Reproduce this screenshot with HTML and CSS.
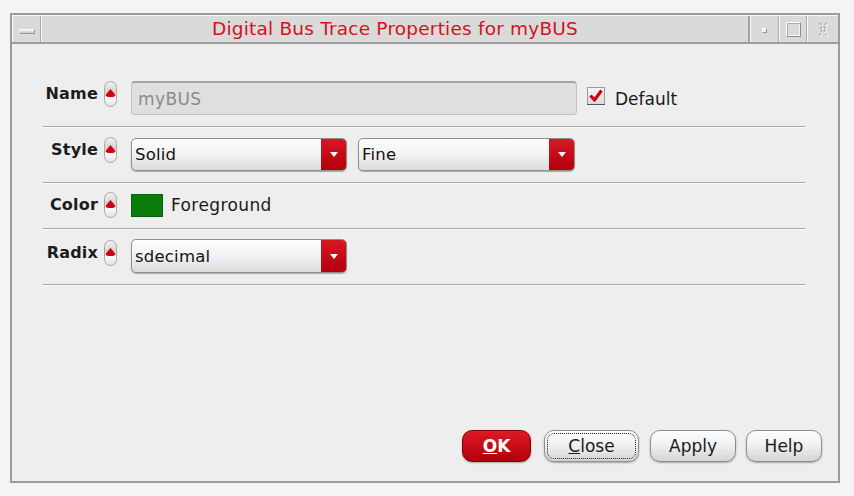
FILE: index.html
```html
<!DOCTYPE html>
<html lang="en">
<head>
<meta charset="utf-8">
<title>Digital Bus Trace Properties for myBUS</title>
<link rel="stylesheet" href="styles.css">
</head>
<body>
<div class="window">
  <div class="titlebar">
    <div class="tb-btn tb-menu"><span class="glyph-bar"></span></div>
    <div class="tb-title">Digital Bus Trace Properties for myBUS</div>
    <div class="tb-btn tb-min"><span class="glyph-dot"></span></div>
    <div class="tb-btn tb-max"><span class="glyph-box"></span></div>
    <div class="tb-btn tb-close">
      <svg width="14" height="16" viewBox="0 0 14 16">
        <path d="M3 2 Q8 5 4 8 Q8 11 3 14 M11 2 Q6 5 10 8 Q6 11 11 14" stroke="#fbfbfb" stroke-width="2.4" stroke-dasharray="3 1.4" fill="none" transform="translate(0.8 0.8)"/>
        <path d="M3 2 Q8 5 4 8 Q8 11 3 14 M11 2 Q6 5 10 8 Q6 11 11 14" stroke="#b3b3b3" stroke-width="1.8" stroke-dasharray="3 1.4" fill="none"/>
      </svg>
    </div>
  </div>

  <div class="content">
    <div class="form">
      <div class="row row-name">
        <div class="lbl-group">
          <span class="lbl">Name</span>
          <span class="spin"><svg width="11" height="10" viewBox="0 0 11 10"><path d="M5.5 1 L10.5 7 Q10.5 9 5.5 9 Q0.5 9 0.5 7 Z" fill="#cc0010"/></svg></span>
        </div>
        <div class="field">myBUS</div>
        <span class="check">
          <svg width="18" height="18" viewBox="0 0 18 18">
            <defs><linearGradient id="cg" x1="0" y1="0" x2="0" y2="1"><stop offset="0" stop-color="#f7f7f7"/><stop offset="1" stop-color="#d9d9d9"/></linearGradient></defs>
            <rect x="0.5" y="0.5" width="17" height="17" fill="url(#cg)" stroke="#9a9a9a"/>
            <line x1="0" y1="17.5" x2="18" y2="17.5" stroke="#555"/>
            <path d="M3.5 8.5 L7.5 13 L14.5 3.5" stroke="#d20010" stroke-width="3.2" fill="none" stroke-linejoin="round"/>
          </svg>
        </span>
        <span class="check-label">Default</span>
      </div>

      <div class="row row-style">
        <div class="lbl-group">
          <span class="lbl">Style</span>
          <span class="spin"><svg width="11" height="10" viewBox="0 0 11 10"><path d="M5.5 1 L10.5 7 Q10.5 9 5.5 9 Q0.5 9 0.5 7 Z" fill="#cc0010"/></svg></span>
        </div>
        <div class="select">
          <span class="select-text">Solid</span>
          <span class="select-arrow"><span class="tri"></span></span>
        </div>
        <div class="select select-fine">
          <span class="select-text">Fine</span>
          <span class="select-arrow"><span class="tri"></span></span>
        </div>
      </div>

      <div class="row row-color">
        <div class="lbl-group">
          <span class="lbl">Color</span>
          <span class="spin"><svg width="11" height="10" viewBox="0 0 11 10"><path d="M5.5 1 L10.5 7 Q10.5 9 5.5 9 Q0.5 9 0.5 7 Z" fill="#cc0010"/></svg></span>
        </div>
        <span class="swatch"></span>
        <span class="swatch-label">Foreground</span>
      </div>

      <div class="row row-radix">
        <div class="lbl-group">
          <span class="lbl">Radix</span>
          <span class="spin"><svg width="11" height="10" viewBox="0 0 11 10"><path d="M5.5 1 L10.5 7 Q10.5 9 5.5 9 Q0.5 9 0.5 7 Z" fill="#cc0010"/></svg></span>
        </div>
        <div class="select select-radix">
          <span class="select-text">sdecimal</span>
          <span class="select-arrow"><span class="tri"></span></span>
        </div>
      </div>
    </div>

    <div class="actions">
      <button class="btn btn-ok"><u>O</u>K</button>
      <button class="btn btn-close"><u>C</u>lose</button>
      <button class="btn btn-apply">Apply</button>
      <button class="btn btn-help">Help</button>
    </div>
  </div>
</div>
</body>
</html>
```

FILE: styles.css
```css
html, body {
  margin: 0;
  padding: 0;
}
body {
  background: #f4f4f4;
  font-family: "DejaVu Sans", "Noto Sans", sans-serif;
  width: 854px;
  height: 496px;
  overflow: hidden;
}

.window {
  margin: 13px 0 0 10px;
  width: 830px;
  height: 470px;
  box-sizing: border-box;
  border: 2px solid #9b9b9b;
  background: #eeeeee;
  display: flex;
  flex-direction: column;
}

/* title bar */
.titlebar {
  display: flex;
  height: 29px;
  box-sizing: border-box;
  border-top: 1px solid #fafafa;
  border-bottom: 2px solid #9d9d9d;
  background: #dadada;
}
.tb-btn {
  display: flex;
  align-items: center;
  justify-content: center;
  box-sizing: border-box;
  border-left: 1px solid #fafafa;
  border-right: 1px solid #a9a9a9;
}
.tb-menu { width: 29px; }
.tb-min { width: 29px; }
.tb-max { width: 28px; }
.tb-close { width: 31px; border-right: none; }
.tb-title {
  flex: 1;
  text-align: center;
  color: #d4121c;
  font-size: 18.5px;
  letter-spacing: 0.2px;
  line-height: 26px;
  white-space: nowrap;
  border-left: 1px solid #fafafa;
  border-right: 2px solid #a2a2a2;
}
.glyph-bar {
  width: 16px;
  height: 5px;
  box-sizing: border-box;
  margin-top: 4px;
  border: 1px solid;
  border-color: #fbfbfb #9a9a9a #9a9a9a #fbfbfb;
  background: linear-gradient(#f2f2f2, #c4c4c4);
}
.glyph-dot {
  width: 5px;
  height: 5px;
  box-sizing: border-box;
  margin-top: 2px;
  border: 1px solid;
  border-color: #fdfdfd #999 #999 #fdfdfd;
  background: #ececec;
}
.glyph-box {
  width: 15px;
  height: 15px;
  box-sizing: border-box;
  border: 1px solid;
  border-color: #fdfdfd #8f8f8f #8f8f8f #fdfdfd;
  box-shadow: inset 1px 1px 0 #a8a8a8, inset -1px -1px 0 #f6f6f6;
}

/* content */
.content {
  flex: 1;
  display: flex;
  flex-direction: column;
}
.form {
  margin: 37px 33px 0 31px;
}
.row {
  display: flex;
  align-items: flex-start;
  border-bottom: 1px solid #a9a9a9;
  box-shadow: 0 1px 0 #fbfbfb;
}
.row-name { padding: 0 0 11px; }
.row-style { padding: 10px 0 11px; }
.row-color { padding: 9px 0 10px; }
.row-radix { padding: 10px 0 11px; }

.lbl-group {
  display: flex;
  align-items: center;
  height: 26px;
  margin-right: 14px;
}
.row-radix .lbl-group { margin-top: 1px; }
.lbl {
  width: 55px;
  margin-right: 6px;
  margin-bottom: 1px;
  text-align: right;
  font-weight: bold;
  font-size: 16px;
  letter-spacing: 0.2px;
  color: #1c1c1c;
}
.spin {
  width: 13px;
  height: 26px;
  box-sizing: border-box;
  border: 1px solid #a9a9a9;
  border-radius: 7px;
  background: linear-gradient(#f3f3f3, #cdcdcd 46%, #ffffff 54%, #e4e4e4);
  display: flex;
  align-items: center;
  justify-content: center;
}
.spin svg { margin-top: -2px; }

.field {
  width: 446px;
  height: 34px;
  box-sizing: border-box;
  border: 1px solid #c2c2c2;
  border-top: 2px solid #a6a6a6;
  border-radius: 4px;
  background: #dfdfdf;
  color: #8a8a8a;
  font-size: 17px;
  letter-spacing: 0.4px;
  padding-left: 6px;
  display: flex;
  align-items: center;
}
.check {
  margin: 6px 0 0 10px;
  width: 18px;
  height: 18px;
}
.check svg { display: block; }
.check-label {
  margin: 8px 0 0 10px;
  font-size: 17px;
  line-height: 20px;
  color: #1a1a1a;
}

.select {
  display: flex;
  width: 216px;
  height: 33px;
  margin-top: 1px;
  box-sizing: border-box;
  border: 1px solid #8e8e8e;
  border-radius: 5px;
  background: linear-gradient(#fefefe, #f2f2f2 50%, #dcdcdc);
  box-shadow: 0 1px 1px rgba(0, 0, 0, 0.28);
  overflow: hidden;
}
.select-fine {
  width: 217px;
  margin-left: 11px;
}
.select-radix {
  height: 34px;
  margin-top: 0;
}
.select-text {
  flex: 1;
  padding-left: 3px;
  font-size: 16.5px;
  letter-spacing: 0.2px;
  color: #111;
  display: flex;
  align-items: center;
}
.select-arrow {
  width: 25px;
  background: linear-gradient(#d81824, #b2000c);
  display: flex;
  align-items: center;
  justify-content: center;
}
.tri {
  width: 0;
  height: 0;
  border-left: 4px solid transparent;
  border-right: 4px solid transparent;
  border-top: 5px solid #ffffff;
}

.swatch {
  width: 32px;
  height: 23px;
  margin-top: 2px;
  box-sizing: border-box;
  background: #0b7b0b;
  border: 1px solid #066206;
}
.swatch-label {
  margin-left: 8px;
  font-size: 17px;
  letter-spacing: 0.4px;
  line-height: 26px;
  color: #1a1a1a;
}

/* buttons */
.actions {
  margin-top: auto;
  display: flex;
  justify-content: flex-end;
  padding: 0 16px 19px 0;
}
.btn {
  height: 32px;
  padding: 0;
  box-sizing: border-box;
  border: 1px solid #8d8d8d;
  border-radius: 10px;
  background: linear-gradient(#fefefe, #f1f1f1 45%, #d5d5d5);
  box-shadow: 0 1px 2px rgba(0, 0, 0, 0.3);
  font-family: inherit;
  font-size: 17px;
  color: #1a1a1a;
  display: flex;
  align-items: center;
  justify-content: center;
}
.btn-ok {
  width: 69px;
  background: linear-gradient(#dc1a24, #b2000b);
  border-color: #8a0008;
  color: #ffffff;
  font-weight: bold;
}
.btn-close {
  width: 95px;
  margin-left: 13px;
  outline: 1px dotted #222;
  outline-offset: -4px;
}
.btn-apply {
  width: 86px;
  margin-left: 11px;
}
.btn-help {
  width: 76px;
  margin-left: 10px;
}
```
